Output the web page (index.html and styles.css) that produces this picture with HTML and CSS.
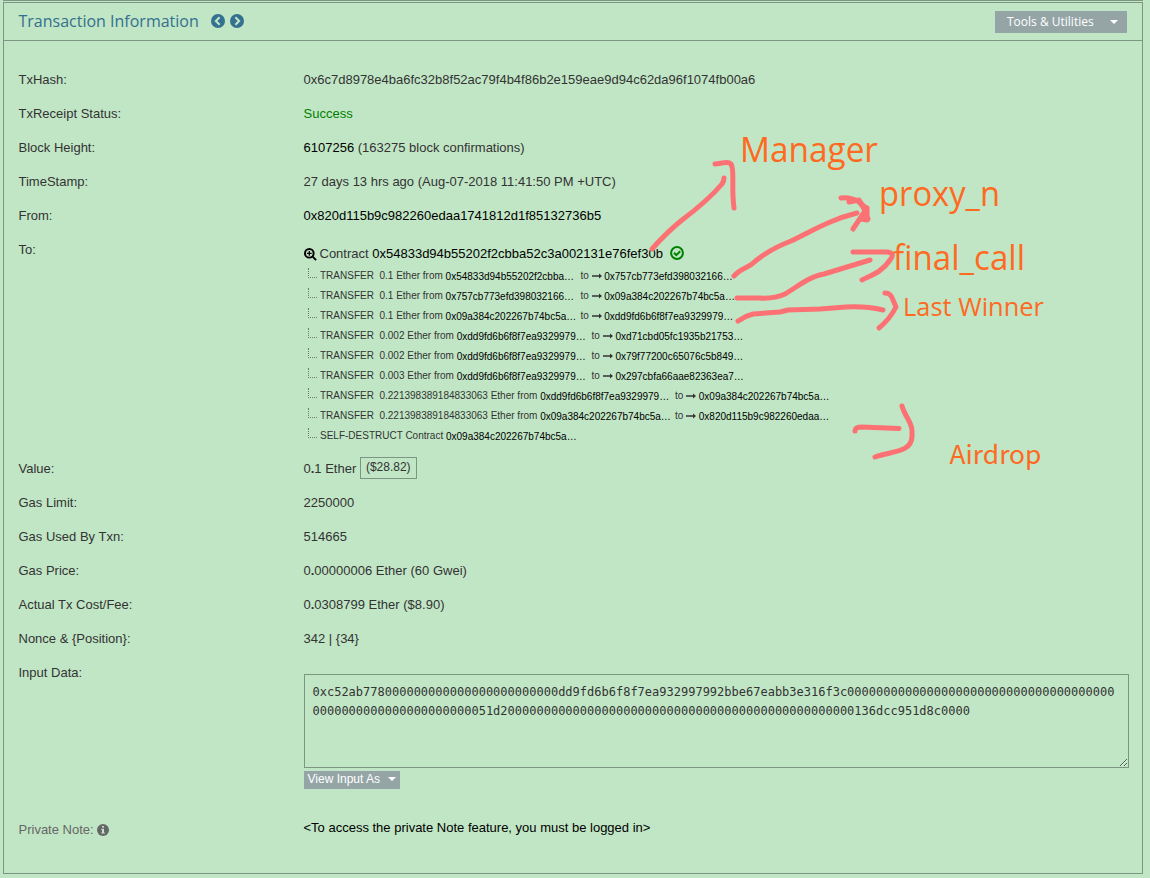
FILE: index.html
```html
<!DOCTYPE html>
<html lang="en">
<head>
<meta charset="utf-8">
<title>Transaction Information</title>
<link rel="stylesheet" href="styles.css">
</head>
<body>
<main class="page">
<section class="panel">
  <header class="panel-head">
    <h1 class="title">Transaction Information</h1>
    <svg class="nav-icon" viewBox="0 0 14 14"><circle cx="7" cy="7" r="7"/><path d="M8.6 3.3 4.9 7l3.7 3.7"/></svg>
    <svg class="nav-icon" viewBox="0 0 14 14"><circle cx="7" cy="7" r="7"/><path d="M5.4 3.3 9.1 7l-3.7 3.7"/></svg>
    <button class="tools">Tools &amp; Utilities<span class="caret"></span></button>
  </header>
  <dl class="details">
    <dt>TxHash:</dt><dd>0x6c7d8978e4ba6fc32b8f52ac79f4b4f86b2e159eae9d94c62da96f1074fb00a6</dd>
    <dt>TxReceipt Status:</dt><dd class="success">Success</dd>
    <dt>Block Height:</dt><dd><a>6107256</a> (163275 block confirmations)</dd>
    <dt>TimeStamp:</dt><dd>27 days 13 hrs ago (Aug-07-2018 11:41:50 PM +UTC)</dd>
    <dt>From:</dt><dd><a>0x820d115b9c982260edaa1741812d1f85132736b5</a></dd>
    <dt>To:</dt>
    <dd class="to">
      <div class="contract">
        <svg class="search" viewBox="0 0 12 12"><circle cx="4.9" cy="4.9" r="4"/><path d="M8 8l3.200 3.200"/><path class="plus" d="M2.700 4.900h4.400M4.900 2.700v4.400"/></svg>
        <span>Contract <a>0x54833d94b55202f2cbba52c3a002131e76fef30b</a></span>
        <svg class="check" viewBox="0 0 14 14"><circle cx="7" cy="7" r="5.9"/><path d="M4 6.8l2.3 2.3 3.9-3.9"/></svg>
      </div>
      <ul class="transfers">
        <li><i class="branch"></i><span class="kind">TRANSFER&nbsp; 0.1 Ether from</span><a class="addr">0x54833d94b55202f2cbba…</a><span>to</span><svg class="arrow" viewBox="0 0 10 6"><path d="M0 3h8"/><path class="tip" d="M7 .5 10 3 7 5.5z"/></svg><a>0x757cb773efd398032166…</a></li>
        <li><i class="branch"></i><span class="kind">TRANSFER&nbsp; 0.1 Ether from</span><a class="addr">0x757cb773efd398032166…</a><span>to</span><svg class="arrow" viewBox="0 0 10 6"><path d="M0 3h8"/><path class="tip" d="M7 .5 10 3 7 5.5z"/></svg><a>0x09a384c202267b74bc5a…</a></li>
        <li><i class="branch"></i><span class="kind">TRANSFER&nbsp; 0.1 Ether from</span><a class="addr">0x09a384c202267b74bc5a…</a><span>to</span><svg class="arrow" viewBox="0 0 10 6"><path d="M0 3h8"/><path class="tip" d="M7 .5 10 3 7 5.5z"/></svg><a>0xdd9fd6b6f8f7ea9329979…</a></li>
        <li><i class="branch"></i><span class="kind">TRANSFER&nbsp; 0.002 Ether from</span><a class="addr">0xdd9fd6b6f8f7ea9329979…</a><span>to</span><svg class="arrow" viewBox="0 0 10 6"><path d="M0 3h8"/><path class="tip" d="M7 .5 10 3 7 5.5z"/></svg><a>0xd71cbd05fc1935b21753…</a></li>
        <li><i class="branch"></i><span class="kind">TRANSFER&nbsp; 0.002 Ether from</span><a class="addr">0xdd9fd6b6f8f7ea9329979…</a><span>to</span><svg class="arrow" viewBox="0 0 10 6"><path d="M0 3h8"/><path class="tip" d="M7 .5 10 3 7 5.5z"/></svg><a>0x79f77200c65076c5b849…</a></li>
        <li><i class="branch"></i><span class="kind">TRANSFER&nbsp; 0.003 Ether from</span><a class="addr">0xdd9fd6b6f8f7ea9329979…</a><span>to</span><svg class="arrow" viewBox="0 0 10 6"><path d="M0 3h8"/><path class="tip" d="M7 .5 10 3 7 5.5z"/></svg><a>0x297cbfa66aae82363ea7…</a></li>
        <li><i class="branch"></i><span class="kind">TRANSFER&nbsp; 0.221398389184833063 Ether from</span><a class="addr">0xdd9fd6b6f8f7ea9329979…</a><span>to</span><svg class="arrow" viewBox="0 0 10 6"><path d="M0 3h8"/><path class="tip" d="M7 .5 10 3 7 5.5z"/></svg><a>0x09a384c202267b74bc5a…</a></li>
        <li><i class="branch"></i><span class="kind">TRANSFER&nbsp; 0.221398389184833063 Ether from</span><a class="addr">0x09a384c202267b74bc5a…</a><span>to</span><svg class="arrow" viewBox="0 0 10 6"><path d="M0 3h8"/><path class="tip" d="M7 .5 10 3 7 5.5z"/></svg><a>0x820d115b9c982260edaa…</a></li>
        <li><i class="branch"></i><span class="kind">SELF-DESTRUCT Contract</span><a class="addr">0x09a384c202267b74bc5a…</a></li>
      </ul>
    </dd>
    <dt>Value:</dt><dd class="value">0<b>.</b>1 Ether <span class="usd">($28.82)</span></dd>
    <dt>Gas Limit:</dt><dd>2250000</dd>
    <dt>Gas Used By Txn:</dt><dd>514665</dd>
    <dt>Gas Price:</dt><dd>0<b>.</b>00000006 Ether (60 Gwei)</dd>
    <dt>Actual Tx Cost/Fee:</dt><dd>0<b>.</b>0308799 Ether ($8.90)</dd>
    <dt>Nonce &amp; {Position}:</dt><dd>342 | {34}</dd>
    <dt>Input Data:</dt>
    <dd class="input">
      <textarea class="data" readonly>0xc52ab778000000000000000000000000dd9fd6b6f8f7ea932997992bbe67eabb3e316f3c0000000000000000000000000000000000000
0000000000000000000000051d2000000000000000000000000000000000000000000000000136dcc951d8c0000</textarea>
      <button class="view-as">View Input As<span class="caret"></span></button>
    </dd>
    <dt class="note">Private Note: <svg class="info" viewBox="0 0 12 12"><circle cx="6" cy="6" r="6"/><path d="M5 2h2v1.6H5zM4.3 4.8H7v3.6h.8v1.2H4.3V8.4H5V6h-.7z"/></svg></dt>
    <dd class="login">&lt;To access the private Note feature, you must be logged in&gt;</dd>
  </dl>
</section>
<svg class="annotations" width="1150" height="878" viewBox="0 0 1150 878">
  <g class="ink">
    <path d="M652 249Q667 232 682 220C698 208 711 197 722 184Q724 181 724 178"/>
    <path d="M715 164C723 163 728 161 731 164C735 170 731 186 734 208"/>
    <path d="M734 276C740 269 747 268 752 264C763 254 778 246 791 241C812 231 829 220 857 213"/>
    <path d="M841 198Q851 197 859 202Q865 208 868 219M849 202L859 200Q863 207 867 208Q861 217 853 229M867 208V220L861 219"/>
    <path d="M737 298H759Q774 299 785 294C797 287 810 276 824 274Q850 266 870 260"/>
    <path d="M853 252H887Q896 253 890 260C882 272 872 275 862 280"/>
    <path d="M738 321Q745 316 753 314L780 312L788 310L820 309L846 307Q866 306 883 310"/>
    <path d="M885 293Q891 293 893 300L896 307C891 317 885 323 879 328"/>
    <path d="M855 431Q855 427 861 427L899 428.500"/>
    <path d="M902 406C905 417 912 422 912 431V437C911 453 891 451 875 457"/>
  </g>
  <g class="labels">
    <text x="740" y="161.500" font-size="34.500" textLength="138" lengthAdjust="spacingAndGlyphs">Manager</text>
    <text x="879" y="206" font-size="34.500" textLength="121" lengthAdjust="spacingAndGlyphs">proxy_n</text>
    <text x="893" y="270" font-size="34.500" textLength="132" lengthAdjust="spacingAndGlyphs">final_call</text>
    <text x="903" y="316" font-size="26" textLength="141" lengthAdjust="spacingAndGlyphs">Last Winner</text>
    <text class="cjk" x="949.500" y="464" font-size="26" textLength="92" lengthAdjust="spacingAndGlyphs">Airdrop</text>
  </g>
</svg>
</main>
</body>
</html>
```
FILE: styles.css
```css
* { box-sizing: border-box; }
body {
  margin: 0;
  background: #c1e6c5;
  color: #333;
  font: 13px/20px "Liberation Sans", Arial, sans-serif;
}
.page {
  position: relative;
  height: 878px;
  padding: 0 7px 0 3px;
  overflow: hidden;
}
.page::before {
  content: "";
  display: block;
  height: 1px;
  margin-bottom: 1px;
  background: #7c9681;
}
.panel {
  height: 872px;
  border: 1px solid #7c9681;
}
.panel-head {
  display: flex;
  align-items: center;
  height: 38px;
  padding: 0 15px 0 14.5px;
  border-bottom: 1px solid #7c9681;
}
.title {
  margin: -2px 12px 0 0;
  color: #34708f;
  font: 400 16px/20px "Open Sans", sans-serif;
}
.nav-icon { width: 14px; height: 14px; margin: -1px 5px 0 0; fill: #34708f; }
.nav-icon path { fill: none; stroke: #c1e6c5; stroke-width: 2.1; }
.tools, .view-as {
  display: flex;
  align-items: center;
  justify-content: space-between;
  border: 0;
  background: #95a5a6;
  color: #fff;
}
.tools {
  width: 132px;
  height: 22px;
  margin-left: auto;
  padding: 0 9px 0 12px;
  font: 12px/20px "Open Sans", sans-serif;
}
.caret {
  border: 4px solid transparent;
  border-top-color: #fff;
  border-bottom: 0;
}
.details {
  display: grid;
  grid-template-columns: 285px 825px;
  grid-auto-rows: auto;
  margin: 0;
  padding: 22px 0 0 14.5px;
}
dt, dd { margin: 0; min-height: 34px; padding-top: 7px; }
a { color: #000; }
.success { color: green; }
.to { height: 219px; padding-top: 11px; }
.contract { display: flex; align-items: center; height: 20px; }
.search { width: 13px; height: 13px; margin-right: 3px; fill: none; stroke: #000; stroke-width: 1.8; }
.plus { stroke-width: 1.2; }
.check { width: 14px; height: 14px; margin: -3px 0 0 7px; fill: none; stroke: green; stroke-width: 2; }
.transfers {
  margin: 2px 0 0;
  padding: 0 0 0 4.5px;
  list-style: none;
  font-size: 10px;
}
.transfers li { display: flex; align-items: center; height: 20px; white-space: nowrap; }
.branch {
  width: 9px;
  height: 10px;
  margin: -7px 3px 0 0;
  border: dotted #777;
  border-width: 0 0 1px 1px;
}
.transfers a { padding-top: 2px; }
.addr { width: 132px; margin: 0 2.800px; }
.arrow { width: 10px; height: 6px; margin: -1px 2.500px 0 3px; fill: none; stroke: #333; stroke-width: 1.5; }
.tip { fill: #333; stroke: none; }
.usd {
  display: inline-block;
  height: 22px;
  margin-top: -3px;
  padding: 0 5px;
  border: 1px solid #7c9681;
  font-size: 12px;
  line-height: 18px;
  vertical-align: middle;
}
.value { height: 34px; line-height: 20px; }
.input { height: 157px; padding-top: 18px; }
.data {
  display: block;
  width: 825px;
  height: 94px;
  margin: 0 0 3px;
  padding: 8px;
  border: 1px solid #7c9681;
  border-radius: 0;
  outline: 0;
  background: transparent;
  color: #333;
  font: 12px/19px "DejaVu Sans Mono", monospace;
  white-space: pre;
  overflow: hidden;
  resize: vertical;
}
.view-as {
  width: 96px;
  height: 18px;
  padding: 0 4px 2px;
  font: 12px/16px "Liberation Sans", sans-serif;
}
.note { color: #666; }
.info { width: 12px; height: 12px; vertical-align: -1.500px; fill: #666; }
.info path { fill: #c1e6c5; }
.login { padding-top: 5px; color: #000; }
.annotations { position: absolute; top: 0; left: 0; pointer-events: none; }
.ink { fill: none; stroke: #fc7174; stroke-width: 5; stroke-linecap: round; stroke-linejoin: round; }
.labels { fill: #ff6a22; font-family: "Open Sans", sans-serif; }
.cjk { font-family: "Noto Sans CJK SC", sans-serif; }
```
